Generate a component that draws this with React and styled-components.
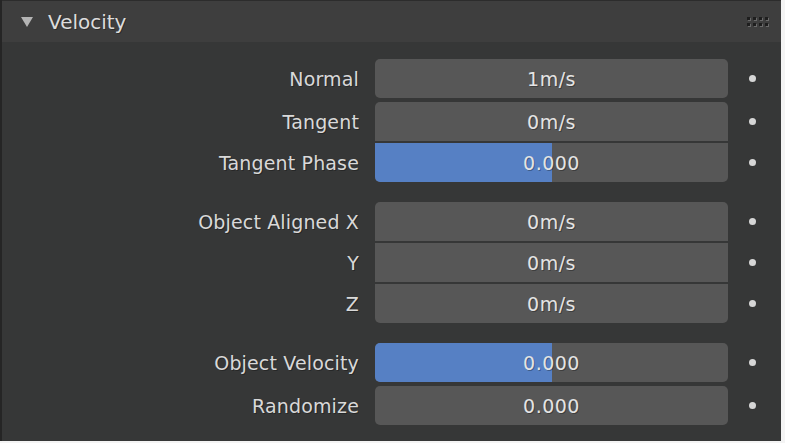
import React from "react"
import styled, { createGlobalStyle } from "styled-components"

// Styles
const GlobalStyle = createGlobalStyle`
    html, body {
        margin: 0;
        padding: 0;
        background: #f4f4f4;
    }
    body {
        font-family: "DejaVu Sans", "Liberation Sans", sans-serif;
    }
`

const Panel = styled.section`
    width: 779px;
    height: 441px;
    background-color: #363737;
    border-left: 2px solid #252525;
    display: flex;
    flex-direction: column;
    overflow: hidden;
`

const Header = styled.header`
    height: 42px;
    flex: none;
    display: flex;
    align-items: center;
    padding: 0 13px 0 19px;
    background-color: #3e3e3e;
    border-top: 1px solid #2c2c2c;
    box-sizing: border-box;
    color: #dcdcdc;
    font-size: 20px;
    text-shadow: 1px 1px 0 rgba(0, 0, 0, 0.3);
`

const Arrow = styled.span`
    width: 0;
    height: 0;
    border-left: 6px solid transparent;
    border-right: 6px solid transparent;
    border-top: 10px solid #b4b4b4;
    margin-right: 15px;
    margin-top: 1px;
`

const Title = styled.span`
    flex: 1;
`

const Grip = styled.span`
    display: grid;
    grid-template-columns: repeat(4, 3px);
    grid-auto-rows: 3px;
    gap: 3px;

    & > i {
        display: block;
        background-color: #1e1e1e;
        box-shadow: 1px 1px 0 #6a6a6a;
    }
`

const Body = styled.div`
    display: flex;
    flex-direction: column;
    gap: 20px;
    padding-top: 17px;
`

const Section = styled.div`
    display: flex;
    flex-direction: column;
    gap: 4px;
`

const Column = styled.div`
    display: flex;
    flex-direction: column;
    gap: 2px;
`

const Row = styled.div`
    display: flex;
    align-items: center;
    height: 39px;
    font-size: 19px;
    letter-spacing: 0.15px;
    text-shadow: 1px 1px 0 rgba(0, 0, 0, 0.3);
`

const Label = styled.span`
    width: 357px;
    margin-right: 16px;
    text-align: right;
    color: #d9d9d9;
`

const Field = styled.div`
    position: relative;
    width: 353px;
    height: 100%;
    background-color: #575757;
    border-radius: ${(p) => (p.$top ? "5px 5px" : "0 0")} ${(p) => (p.$bottom ? "5px 5px" : "0 0")};
    overflow: hidden;
    display: flex;
    align-items: center;
    justify-content: center;
    color: #e4e4e4;
`

const Fill = styled.span`
    position: absolute;
    left: 0;
    top: 0;
    bottom: 0;
    background-color: #5680c4;
`

const Value = styled.span`
    position: relative;
    letter-spacing: 0.5px;
`

const DotCell = styled.span`
    width: 48px;
    display: flex;
    justify-content: center;
`

const Dot = styled.span`
    width: 7px;
    height: 7px;
    border-radius: 50%;
    background-color: #d6d6d6;
`

// Data
const sections = [
    [
        [{ label: "Normal", value: "1m/s" }],
        [
            { label: "Tangent", value: "0m/s" },
            { label: "Tangent Phase", value: "0.000", fill: 0.5 },
        ],
    ],
    [
        [
            { label: "Object Aligned X", value: "0m/s" },
            { label: "Y", value: "0m/s" },
            { label: "Z", value: "0m/s" },
        ],
    ],
    [
        [{ label: "Object Velocity", value: "0.000", fill: 0.5 }],
        [{ label: "Randomize", value: "0.000" }],
    ],
]

function App() {
    return (
        <>
            <GlobalStyle />
            <Panel>
                <Header>
                    <Arrow />
                    <Title>Velocity</Title>
                    <Grip>
                        {Array.from({ length: 8 }).map((_, i) => (
                            <i key={i} />
                        ))}
                    </Grip>
                </Header>

                <Body>
                    {sections.map((columns, s) => (
                        <Section key={s}>
                            {columns.map((rows, c) => (
                                <Column key={c}>
                                    {rows.map((row, r) => (
                                        <Row key={row.label}>
                                            <Label>{row.label}</Label>
                                            <Field
                                                $top={r === 0}
                                                $bottom={r === rows.length - 1}
                                            >
                                                {row.fill && (
                                                    <Fill style={{ width: `${row.fill * 100}%` }} />
                                                )}
                                                <Value>{row.value}</Value>
                                            </Field>
                                            <DotCell>
                                                <Dot />
                                            </DotCell>
                                        </Row>
                                    ))}
                                </Column>
                            ))}
                        </Section>
                    ))}
                </Body>
            </Panel>
        </>
    )
}

export default App
